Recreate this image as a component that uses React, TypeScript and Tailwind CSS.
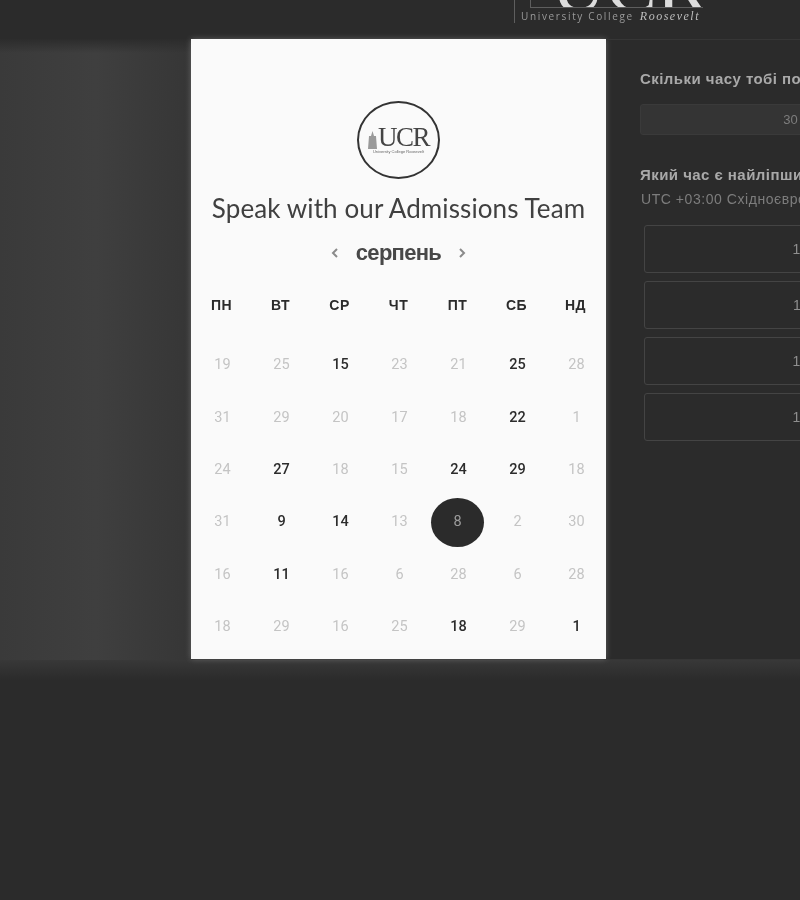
import React from 'react';

type Day = { n: number; on?: boolean; selected?: boolean };

const WEEKDAYS = ['ПН', 'ВТ', 'СР', 'ЧТ', 'ПТ', 'СБ', 'НД'];

const d = (n: number, on = false, selected = false): Day => ({ n, on, selected });

const DAYS: Day[] = [
  d(19), d(25), d(15, true), d(23), d(21), d(25, true), d(28),
  d(31), d(29), d(20), d(17), d(18), d(22, true), d(1),
  d(24), d(27, true), d(18), d(15), d(24, true), d(29, true), d(18),
  d(31), d(9, true), d(14, true), d(13), d(8, false, true), d(2), d(30),
  d(16), d(11, true), d(16), d(6), d(28), d(6), d(28),
  d(18), d(29), d(16), d(25), d(18, true), d(29), d(1, true),
];

const SLOTS = ['10:00', '11:00', '12:00', '13:00'];

const Logo: React.FC = () => (
  <div className="flex h-[39px] items-start overflow-hidden pl-[514px]">
    <div className="h-[23px] w-px bg-[#5e5e5e]" />
    <div className="ml-[6px]">
      <div className="ml-[9px] mt-[-62px] h-[70px] w-[173px] overflow-hidden border-b border-l border-[#5e5e5e]">
        <span className="block pl-[20px] font-['Liberation_Serif',serif] text-[76px] leading-[94px] text-[#dcdcdc]">UCR</span>
      </div>
      <div className="mt-[1px] flex items-baseline gap-[6px] whitespace-nowrap leading-[14px]">
        <span className="font-['Open_Sans',sans-serif] text-[10px] tracking-[1.65px] text-[#9a9a9a]">University College</span>
        <span className="font-['Liberation_Serif',serif] text-[12px] italic tracking-[1.5px] text-[#bdbdbd]">Roosevelt</span>
      </div>
    </div>
  </div>
);

const Tower: React.FC = () => (
  <svg width="9" height="18" viewBox="0 0 9 18" fill="#9a9a9a"><path d="M4.5 0 6 5h2l1 13H0L1 5h2z" /></svg>
);

const Calendar: React.FC = () => (
  <div className="h-[620px] w-[415px] shrink-0 bg-[#fafafa] shadow-[0_0_6px_rgba(255,255,255,0.25)]">
    <div className="flex justify-center pt-[62px]">
      <div className="flex h-[78px] w-[83px] flex-col items-center justify-center rounded-[50%] border-[2.5px] border-[#333]">
        <div className="flex items-end gap-px">
          <Tower />
          <span className="font-['Liberation_Serif',serif] text-[27px] leading-[24px] tracking-[-1.5px] text-[#444]">UCR</span>
        </div>
        <span className="font-['Liberation_Sans',sans-serif] text-[4px] leading-[6px] text-[#666]">University College Roosevelt</span>
      </div>
    </div>
    <h1 className="mt-[13px] whitespace-nowrap text-center font-['Lato',sans-serif] text-[26px] leading-[32px] tracking-[0.1px] text-[#404040]">Speak with our Admissions Team</h1>
    <div className="mt-[17px] flex h-[24px] items-center justify-center gap-[17px] font-['Liberation_Sans',sans-serif]">
      <ChevronLeft />
      <span className="text-[22px] font-bold leading-[24px] tracking-[-0.7px] text-[#484848]">серпень</span>
      <ChevronRight />
    </div>
    <div className="mt-[32px] grid grid-cols-7 px-px font-['Liberation_Sans',sans-serif] text-[14px] font-bold leading-[16px] tracking-[0.5px] text-[#2b2b2b]">
      {WEEKDAYS.map((w) => (
        <div key={w} className="text-center">{w}</div>
      ))}
    </div>
    <div className="mt-[26px] grid grid-cols-7 pl-[2px] font-['Roboto',sans-serif] text-[14.5px]">
      {DAYS.map((day, i) => (
        <div key={i} className="flex h-[52.4px] items-center justify-center">
          {day.selected ? (
            <div className="mr-[2px] flex h-[49px] w-[53px] items-center justify-center rounded-[50%] bg-[#2b2b2b] pb-[1px] text-[#9c9c9c]">{day.n}</div>
          ) : (
            <span className={day.on ? 'font-medium text-[#2c2c2c]' : 'text-[#c4c4c4]'}>{day.n}</span>
          )}
        </div>
      ))}
    </div>
  </div>
);

const ChevronLeft: React.FC = () => (
  <svg width="8" height="10" viewBox="0 0 8 10" fill="none" stroke="#8a8a8a" strokeWidth="2"><path d="M6 1 2 5l4 4" /></svg>
);

const ChevronRight: React.FC = () => (
  <svg width="8" height="10" viewBox="0 0 8 10" fill="none" stroke="#8a8a8a" strokeWidth="2"><path d="m2 1 4 4-4 4" /></svg>
);

const TimePanel: React.FC = () => (
  <div className="w-[372px] shrink-0 border-y border-[#363636] pl-[34px] font-['Liberation_Sans',sans-serif]">
    <p className="mt-[30px] whitespace-nowrap text-[15px] font-bold leading-[18px] tracking-[0.45px] text-[#a9a9a9]">Скільки часу тобі потрібно?</p>
    <div className="mt-[16px] flex h-[31px] w-[318px] items-center justify-center rounded-[3px] border border-[#3a3a3a] bg-[#343434] text-[13px] text-[#7d7d7d]">30 хв</div>
    <p className="mt-[31px] whitespace-nowrap text-[15px] font-bold leading-[18px] tracking-[0.45px] text-[#a9a9a9]">Який час є найліпшим для тебе?</p>
    <p className="mt-[6px] whitespace-nowrap pl-px text-[14px] leading-[18px] tracking-[0.55px] text-[#7d7d7d]">UTC +03:00 Східноєвропейський час</p>
    <div className="ml-[4px] mt-[17px] flex w-[332px] flex-col gap-[8px]">
      {SLOTS.map((s) => (
        <div key={s} className="flex h-[48px] items-center justify-center rounded-[3px] border border-[#444] text-[14px] text-[#8f8f8f]">{s}</div>
      ))}
    </div>
  </div>
);

const App: React.FC = () => (
  <div className="h-[900px] w-[800px] overflow-hidden bg-[#2b2b2b]">
    <div className="blur-[0.5px]">
      <Logo />
      <div className="flex h-[621px]">
        <div className="w-[191px] shrink-0 bg-gradient-to-r from-[#3a3a3a] via-[#3f3f3f] to-[#363636]">
          <div className="h-[14px] bg-gradient-to-b from-[#2c2c2c] to-transparent" />
        </div>
        <Calendar />
        <TimePanel />
      </div>
      <div className="h-[20px] bg-gradient-to-b from-[#383838] to-[#2b2b2b]" />
    </div>
  </div>
);

export default App;
